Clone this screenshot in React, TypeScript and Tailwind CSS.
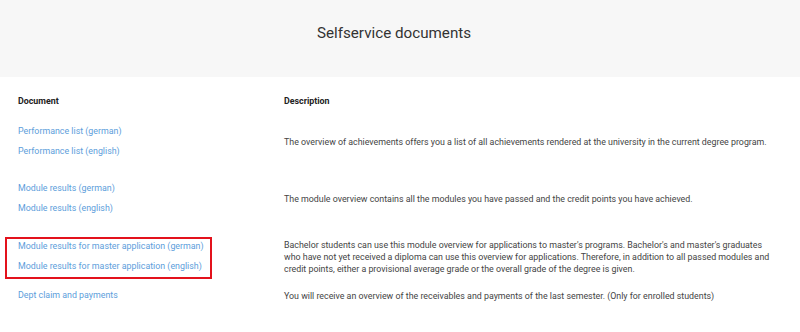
const rows = [
  {
    links: ['Performance list (german)', 'Performance list (english)'],
    description: [
      'The overview of achievements offers you a list of all achievements rendered at the university in the current degree program.',
    ],
    gap: 'mt-[11px]',
  },
  {
    links: ['Module results (german)', 'Module results (english)'],
    description: [
      'The module overview contains all the modules you have passed and the credit points you have achieved.',
    ],
    gap: 'mt-[18px]',
  },
  {
    links: ['Module results for master application (german)', 'Module results for master application (english)'],
    description: [
      "Bachelor students can use this module overview for applications to master's programs. Bachelor's and master's graduates",
      'who have not yet received a diploma can use this overview for applications. Therefore, in addition to all passed modules and',
      'credit points, either a provisional average grade or the overall grade of the degree is given.',
    ],
    gap: 'mt-[19px]',
    marked: true,
  },
  {
    links: ['Dept claim and payments'],
    description: [
      'You will receive an overview of the receivables and payments of the last semester. (Only for enrolled students)',
    ],
    gap: 'mt-[10px]',
  },
]

export default function App() {
  return (
    <div className="w-[800px] h-[332px] bg-white overflow-hidden font-['Roboto',sans-serif] text-[8.85px]">
      {/* Page header */}
      <div className="h-[77px] bg-[#f7f7f7] flex justify-center pt-[23px] pr-[12px]">
        <h1 className="text-[15.2px] leading-[20px] text-[#333333]">Selfservice documents</h1>
      </div>

      {/* Documents table */}
      <div className="px-[18px] pt-[14px]">
        <div className="grid grid-cols-[266px_1fr] leading-[20px] font-bold text-[#222222]">
          <div>Document</div>
          <div>Description</div>
        </div>

        {rows.map((row) => (
          <div key={row.links[0]} className={`grid grid-cols-[266px_1fr] items-center ${row.gap}`}>
            <div className="relative">
              {row.links.map((link) => (
                <a key={link} href="#" className="block leading-[19.5px] text-[#5d9edb]">
                  {link}
                </a>
              ))}
              {row.marked && (
                <span className="absolute left-[-13px] top-0 w-[207px] h-[42px] border-2 border-[#e3121c]" />
              )}
            </div>
            <div className="leading-[12px] text-[#444444] whitespace-nowrap">
              {row.description.map((line) => (
                <div key={line}>{line}</div>
              ))}
            </div>
          </div>
        ))}
      </div>
    </div>
  )
}
